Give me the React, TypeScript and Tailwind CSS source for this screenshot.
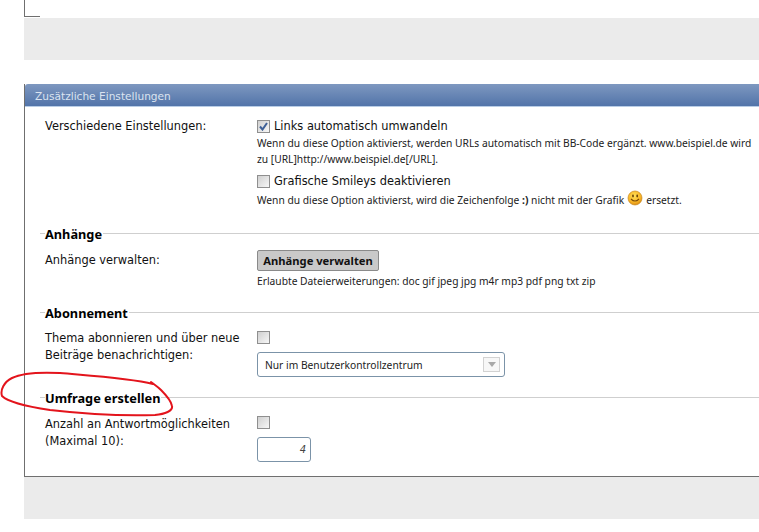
const sans = "font-['DejaVu_Sans',sans-serif]";
const small = "font-['Noto_Sans',sans-serif] text-[10.25px] leading-[16px] text-[#222] whitespace-nowrap";

function Check({ checked = false }: { checked?: boolean }) {
  return (
    <span className="flex h-[13px] w-[13px] shrink-0 items-center justify-center border border-[#8f8f8f] bg-gradient-to-br from-[#d0d0d0] to-[#f7f7f7]">
      {checked && (
        <svg width="9" height="9" viewBox="0 0 9 9">
          <path d="M1 4.5 L3.5 7.5 L8 1" fill="none" stroke="#3d5f96" strokeWidth="2" />
        </svg>
      )}
    </span>
  );
}

function Legend({ children, className }: { children: string; className: string }) {
  return (
    <div className={`flex items-center ${className}`}>
      <div className="h-px w-[5px] bg-[#cfcfcf]" />
      <div className="h-[16px] pt-px pr-px font-['Noto_Sans',sans-serif] text-[12.75px] leading-[16px] font-bold text-black">{children}</div>
      <div className="h-px flex-1 bg-[#cfcfcf]" />
    </div>
  );
}

function Smiley() {
  return (
    <svg width="16" height="16" viewBox="0 0 16 16" className="mx-[3px] -mt-[6px] inline-block align-middle">
      <defs>
        <radialGradient id="s" cx="45%" cy="35%" r="65%">
          <stop offset="0%" stopColor="#ffe15a" />
          <stop offset="70%" stopColor="#f8b324" />
          <stop offset="100%" stopColor="#d88a12" />
        </radialGradient>
      </defs>
      <circle cx="8" cy="8" r="7" fill="url(#s)" stroke="#c98a20" strokeWidth="0.7" />
      <ellipse cx="6" cy="6" rx="0.9" ry="1.4" fill="#6b4208" />
      <ellipse cx="10.2" cy="6" rx="0.9" ry="1.4" fill="#6b4208" />
      <path d="M4 9 Q8 13 12 9" fill="none" stroke="#7a4a08" strokeWidth="1.1" />
    </svg>
  );
}

export default function App() {
  return (
    <div className={`relative h-[532px] w-[759px] overflow-hidden bg-white pl-6 ${sans}`}>
      <div className="h-[17px] w-4 border-b border-l border-[#6f6f6f]" />
      <div className="mt-px h-[42px] bg-[#ebebeb]" />

      <section className="mt-6 h-[393px] border-b border-l border-[#6f6f6f]">
        <div className="h-[23px] rounded-tl-[3px] border-b border-b-[#b9cde6] bg-gradient-to-b from-[#7e98c0] to-[#5274a9] pl-[10px] text-[10.6px] leading-[25px] text-[#dbe4f0]">
          Zusätzliche Einstellungen
        </div>

        <div className="flex pt-[9px] pl-5 text-[11.4px] leading-[19px] text-[#111]">
          <div className="w-[212px] shrink-0 pt-px">Verschiedene Einstellungen:</div>
          <div className="min-w-0 flex-1">
            <div className="flex items-center gap-[4px] pt-px">
              <Check checked />
              Links automatisch umwandeln
            </div>
            <div className={`-mt-px ${small}`}>
              Wenn du diese Option aktivierst, werden URLs automatisch mit BB-Code ergänzt. www.beispiel.de wird
              <br />
              zu [URL]http://www.beispiel.de[/URL].
            </div>
            <div className="mt-[5px] flex items-center gap-[4px]">
              <Check />
              Grafische Smileys deaktivieren
            </div>
            <div className={`mt-[1px] ${small}`}>
              Wenn du diese Option aktivierst, wird die Zeichenfolge <b>:)</b> nicht mit der Grafik
              <Smiley />
              ersetzt.
            </div>
          </div>
        </div>

        <Legend className="mt-[17px] ml-[15px]">Anhänge</Legend>
        <div className="flex pt-[9px] pl-5 text-[11.4px] leading-[17px] text-[#111]">
          <div className="w-[212px] shrink-0 pt-[2px]">Anhänge verwalten:</div>
          <div className="min-w-0 flex-1">
            <div className="flex h-[21px] w-[122px] items-center justify-center rounded-[2px] border border-[#8a8a8a] bg-[#c9c9c9] font-['Noto_Sans',sans-serif] text-[11.2px] font-bold whitespace-nowrap text-[#111]">
              Anhänge verwalten
            </div>
            <div className={`mt-[2px] ${small}`}>
              Erlaubte Dateierweiterungen: doc gif jpeg jpg m4r mp3 pdf png txt zip
            </div>
          </div>
        </div>

        <Legend className="mt-[15px] ml-[15px]">Abonnement</Legend>
        <div className="flex pt-[9px] pl-5 text-[11.4px] leading-[17px] text-[#111]">
          <div className="w-[212px] shrink-0 pt-[1px]">
            Thema abonnieren und über neue
            <br />
            Beiträge benachrichtigen:
          </div>
          <div className="min-w-0 flex-1">
            <div className="mt-[2px]">
              <Check />
            </div>
            <div className={`mt-[8px] flex h-[25px] w-[248px] items-center justify-between rounded-[3px] border border-[#7b93a8] pr-[4px] pl-[7px] ${small}`}>
              Nur im Benutzerkontrollzentrum
              <span className="flex h-[15px] w-[17px] items-center justify-center border border-[#d2d2d2] bg-[#f7f7f7]">
                <svg width="8" height="5" viewBox="0 0 8 5">
                  <path d="M0 0 H8 L4 5 Z" fill="#a8a8a8" />
                </svg>
              </span>
            </div>
          </div>
        </div>

        <Legend className="mt-[12px] ml-[15px]">Umfrage erstellen</Legend>
        <div className="flex pt-[9px] pl-5 text-[11.4px] leading-[17px] text-[#111]">
          <div className="w-[212px] shrink-0 pt-[2px]">
            Anzahl an Antwortmöglichkeiten
            <br />
            (Maximal 10):
          </div>
          <div className="min-w-0 flex-1">
            <div className="mt-[2px]">
              <Check />
            </div>
            <div className="mt-[8px] flex h-[25px] w-[54px] items-center justify-end rounded-[3px] border border-[#7b93a8] pr-[4px] text-[10px] text-[#444] italic">
              4
            </div>
          </div>
        </div>
      </section>

      <div className="h-[42px] bg-[#ebebeb]" />

      <svg width="180" height="50" viewBox="0 370 180 50" className="absolute top-[370px] left-0" fill="none">
        <path
          d="M153 384 C130 378 95 376 60 373 C40 372 22 373 12 378 C4 382 0 390 2 396 C8 402 30 407 50 410 C85 414 125 416 155 415 C165 414 173 411 172 406 C171 400 166 395 161 390 C158 387 155 385 151 382"
          stroke="#e3141c"
          strokeWidth="2"
          strokeLinecap="round"
        />
      </svg>
    </div>
  );
}
